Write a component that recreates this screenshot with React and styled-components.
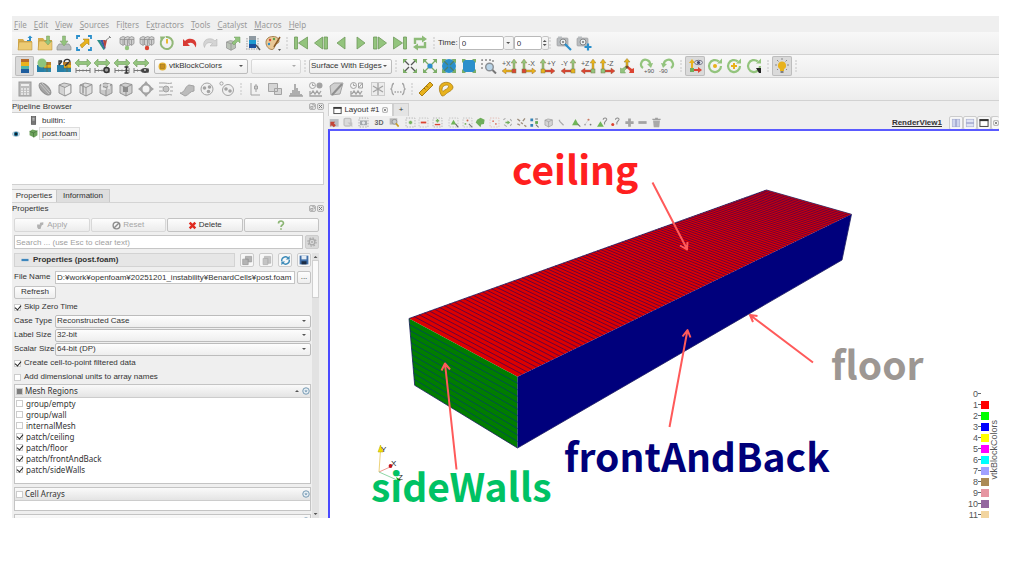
import styled, { createGlobalStyle } from "styled-components";

const GREEN = "#93c47d";
const GREY = "#a3a3a3";
const YELLOW = "#e8b21c";
const RED = "#dc4432";
const BLUE = "#2b8fcb";

const arrowsH = (
  <>
    <path d="M0 5l4-4v2.500h8v-2.500l4 4-4 4v-2.500h-8v2.500z" fill={GREEN} stroke="#6f9c5c" strokeWidth=".6" />
    <path d="M1 10v5M15 10v5M1 12.500h14M4.500 11.500v2M8 11.500v2M11.500 11.500v2" stroke="#777" fill="none" />
  </>
);

const camera = (
  <>
    <rect x="1" y="3" width="11" height="8" rx="1" fill="#b9bdc0" stroke="#999" strokeWidth=".6" />
    <rect x="2" y="1.500" width="4" height="2" fill="#b9bdc0" />
    <circle cx="7" cy="7" r="3" fill="#e9eef0" stroke="#888" />
    <circle cx="7" cy="7" r="1" fill="#777" />
  </>
);

const cube = (fill) => (
  <g stroke="#8d8d8d" strokeWidth=".9" fill={fill}>
    <path d="M2 4l5-2 7 1.500v8.500l-6 3-6-3z" />
    <path d="M2 4l6 2.500 6-3M8 6.500v8.500" fill="none" />
  </g>
);

const servers = (
  <g stroke="#8a8a8a" strokeWidth=".7" fill="#cfcfcf">
    <path d="M1 3l3-1.500 3 1v6l-3 2-3-2z" />
    <path d="M5.500 3l3-1.500 3 1v7l-3 2-3-2z" />
    <path d="M10 3l2.500-1.500 2.500 1v6l-2.500 2-2.500-2z" />
    <path d="M1 4.500h14M4 5v5M8.500 5v6M12.500 5v5" fill="none" />
  </g>
);

const colorMap = (
  <>
    <rect x="7" y="4" width="8" height="3" fill="#b97d2a" />
    <rect x="7" y="7" width="8" height="3" fill={YELLOW} />
    <rect x="7" y="10" width="8" height="4" fill="#2e86a8" />
    <rect x="1" y="7" width="7" height="7" fill="#267fa8" />
    <path d="M11 4v10M7 10h8" stroke="#6b5a36" strokeWidth=".6" />
  </>
);

const outwards = (stroke) => (
  <g stroke={stroke} strokeWidth="1.300" fill="none">
    <path d="M7 7L2 2M9 7l5-5M7 9l-5 5M9 9l5 5" />
    <path d="M1 1h4.500l-4.500 4.500zM15 1v4.500l-4.500-4.500zM1 15v-4.500l4.500 4.500zM15 15h-4.500l4.500-4.500z" fill="#7cae67" stroke="none" />
  </g>
);

const axisView = (label, left, up, side, base) => (
  <>
    <path
      d={left ? "M12 12v-7h-2l3-4 3 4h-2v7z" : "M2 12v-7h-2l3-4 3 4h-2v7z"}
      fill={up}
      stroke="#8a7a3a"
      strokeWidth=".4"
    />
    <path
      d={left ? "M11 12h-6v-2l-4 3 4 3v-2h6z" : "M5 12h6v-2l4 3-4 3v-2h-6z"}
      fill={side}
      stroke="#8a5a3a"
      strokeWidth=".4"
    />
    <rect x={left ? 11 : 1} y="11" width="4" height="4" fill={base} stroke="#7a7a4a" strokeWidth=".5" />
    <text x={left ? 1 : 7} y="8" fontSize="7" fontFamily="Liberation Sans" fill="#555">{label}</text>
  </>
);

const spin = (
  <>
    <path d="M14 8a6 6 0 1 1-2.200-4.600" fill="none" stroke={GREEN} strokeWidth="2.200" />
    <path d="M10 5.500h5v-5z" fill={GREEN} />
  </>
);

const dashed = (color) => (
  <rect x="1.500" y="1.500" width="13" height="13" fill="none" stroke={color} strokeWidth="1.200" strokeDasharray="2 2" />
);

const plot = (
  <>
    <circle cx="4.500" cy="4.500" r="3" fill="none" stroke={GREY} />
    <path d="M4.500 2.500v2h2" fill="none" stroke={GREY} />
    <path d="M2 10v5h12M3 13l2-3 2 3 2-3 2 3 2-3" fill="none" stroke={GREY} strokeWidth="1.300" />
  </>
);

const glyphs = {
  open: (
    <>
      <path d="M1 4h5l1.500 2h7.500v9h-14z" fill="#d5ab4d" />
      <path d="M2 7h13v8h-14z" fill="#eccb74" stroke="#b48b34" strokeWidth=".5" />
      <path d="M10 5h2v-2h-1.500l2.500-2.500 2.500 2.500h-1.500v3h-4z" fill={BLUE} />
    </>
  ),
  openRecent: (
    <>
      <path d="M1 3h5l1.500 2h7.500v10h-14z" fill="#d5ab4d" />
      <path d="M2 6h13v9h-14z" fill="#eccb74" stroke="#b48b34" strokeWidth=".5" />
      <path d="M9.500 1h3v5h2l-3.500 4-3.500-4h2z" fill={GREEN} stroke="#7c9a4a" strokeWidth=".5" />
    </>
  ),
  save: (
    <>
      <path d="M1 12l2-3h10l2 3v3h-14z" fill="#b9bcbe" stroke="#8c8f91" strokeWidth=".7" />
      <path d="M6.500 1h3v5h2.500l-4 5-4-5h2.500z" fill={GREEN} stroke="#7c9a6a" strokeWidth=".5" />
    </>
  ),
  extract: (
    <>
      <path d="M1 4v-3h3M12 1h3v3M15 12v3h-3M4 15h-3v-3" fill="none" stroke={BLUE} strokeWidth="1.800" />
      <path d="M4 10l5-4-2-2h6v6l-2-2-5 5z" fill={YELLOW} stroke="#a27b12" strokeWidth=".5" />
    </>
  ),
  filter: (
    <>
      <path d="M1 5h3l5 9-1.500 1z" fill="#2c8c86" />
      <path d="M4 5h3l2.500 8-1 1z" fill="#3859a8" />
      <path d="M7 5h4l-2 9z" fill="#b8453a" />
      <path d="M9 6l5-4M13 1l2 2" stroke="#888" />
    </>
  ),
  connect: <>{servers}<circle cx="8" cy="13" r="2.200" fill={GREEN} /></>,
  disconnect: <>{servers}<circle cx="8" cy="13" r="2.200" fill={RED} /></>,
  history: (
    <>
      <path d="M3.200 4a6 6 0 1 0 3.800-2" fill="none" stroke="#92b878" strokeWidth="2" />
      <path d="M1 1.500h6l-5 5z" fill="#92b878" />
      <path d="M8 4v4.500" stroke={YELLOW} strokeWidth="1.800" />
    </>
  ),
  undo: <path d="M1 4v7h7l-2.500-2.500c3.500-2 7-.5 8 4 2.500-5-1-10-7.500-8.500-1.200.3-2 1-3 2z" fill="#d83b34" />,
  redo: (
    <path
      d="M15 4v7h-7l2.500-2.500c-3.500-2-7-.5-8 4-2.500-5 1-10 7.500-8.500 1.200.3 2 1 3 2z"
      fill="#d4d4d4"
      stroke="#b0b0b0"
      strokeWidth=".5"
    />
  ),
  cubeUp: (
    <>
      <g transform="translate(0 4) scale(.75)">{cube("#b9c1b6")}</g>
      <path d="M7 8l4-4-2-2h6v6l-2-2-4 4z" fill={GREEN} stroke="#6f9c5c" strokeWidth=".5" />
    </>
  ),
  barSelect: (
    <>
      <rect x="4" y="1" width="7" height="4" fill="#8f9aa2" />
      <rect x="4" y="5" width="7" height="4" fill="#1f9ad0" />
      <rect x="4" y="9" width="7" height="4" fill="#1b4f9c" />
      <path d="M1 14h12M2 3v10M13 3v10" stroke="#999" strokeDasharray="1.500 1" />
      <path d="M11 10l4 5" stroke="#555" strokeWidth="1.500" />
    </>
  ),
  palette: (
    <>
      <path d="M8 1.500c5 0 6 3 6 5s-3 2-4 3 0 5-3 5-6-3-6-7 3-6 7-6z" fill="#e9c896" stroke="#a88454" />
      <circle cx="5" cy="5" r="1.200" fill={RED} />
      <circle cx="4" cy="9" r="1.200" fill={BLUE} />
      <circle cx="9" cy="4" r="1.200" fill="#5aa04c" />
      <path d="M15 2l-6 10" stroke="#8a5a24" strokeWidth="1.500" />
      <path d="M13 14h3l-1.500 2z" fill="#555" />
    </>
  ),
  first: <path d="M1.500 2h3v12h-3zM14.500 2v12l-9-6z" fill={GREEN} stroke="#709a5c" strokeWidth=".8" />,
  previous: <path d="M11 2h3.500v12h-3.500zM9.500 2v12l-8-6z" fill={GREEN} stroke="#709a5c" strokeWidth=".8" />,
  back: <path d="M12 2v12l-8-6z" fill={GREEN} stroke="#709a5c" strokeWidth=".8" />,
  play: <path d="M4 2v12l8-6z" fill={GREEN} stroke="#709a5c" strokeWidth=".8" />,
  next: <path d="M1.500 2h3.500v12h-3.500zM6.500 2v12l8-6z" fill={GREEN} stroke="#709a5c" strokeWidth=".8" />,
  last: <path d="M11.500 2h3v12h-3zM1.500 2v12l9-6z" fill={GREEN} stroke="#709a5c" strokeWidth=".8" />,
  loop: (
    <>
      <path d="M3 9v-5h8M13 7v5h-8" fill="none" stroke="#8dbb77" strokeWidth="2.400" />
      <path d="M10 .5l5 3.500-5 3.500zM6 8.500l-5 3.500 5 3.500z" fill="#8dbb77" />
    </>
  ),
  cameraEdit: <>{camera}<path d="M9 9l6 6" stroke={BLUE} strokeWidth="2.200" /></>,
  cameraAdd: <>{camera}<path d="M12 8.500v7M8.500 12h7" stroke={BLUE} strokeWidth="2.200" /></>,
  legend: (
    <>
      <rect x="4" y="1" width="8" height="4" fill="#b66a2a" />
      <rect x="4" y="4" width="8" height="4" fill={YELLOW} />
      <rect x="4" y="8" width="8" height="3" fill="#4fb6a8" />
      <rect x="4" y="11" width="8" height="4" fill="#1e5d9e" />
    </>
  ),
  mapEdit: <>{colorMap}<circle cx="6" cy="5" r="4.500" fill="#8cc47c" /></>,
  mapSeparate: (
    <>
      {colorMap}
      <path d="M3 7v-4h3M6 3l-3 4M8 4c1-4 6-3 6 0M13 4l-4 4" stroke="#333" strokeWidth="1.300" fill="none" />
    </>
  ),
  rescale: arrowsH,
  rescaleCustom: <>{arrowsH}<circle cx="12.500" cy="12" r="2.500" fill="#999" stroke="#333" strokeWidth="1.500" /></>,
  rescaleTime: <>{arrowsH}<path d="M10.500 9h4M12.500 9v6M10.500 15h4" stroke="#333" strokeWidth="1.500" /></>,
  rescaleVisible: <>{arrowsH}<ellipse cx="12" cy="12.500" rx="4" ry="2.500" fill="#444" /><circle cx="12" cy="12" r="1" fill="#ccc" /></>,
  reset: outwards("#555"),
  zoomData: <>{outwards("#7aa968")}<circle cx="8" cy="8" r="2.600" fill={BLUE} /></>,
  resetClosest: <><circle cx="8" cy="8" r="7" fill={BLUE} />{outwards("#4d7f6a")}</>,
  zoomClosest: (
    <>
      <rect x="2" y="2" width="12" height="12" rx="1" fill={BLUE} />
      <path d="M1 1h4l-4 4zM15 1v4l-4-4zM1 15v-4l4 4zM15 15h-4l4-4z" fill="#7cae67" />
    </>
  ),
  zoomBox: (
    <>
      <path d="M1 11v-9h11v3" stroke="#888" fill="none" strokeDasharray="2 2" strokeWidth="1.400" />
      <circle cx="8.500" cy="9" r="3.800" fill="#b8d4e8" stroke="#8a8f94" strokeWidth="1.400" />
      <path d="M11.500 12l3.500 3.500" stroke="#777" strokeWidth="2" />
    </>
  ),
  plusX: axisView("+X", true, GREEN, YELLOW, RED),
  minusX: axisView("-X", false, GREEN, YELLOW, RED),
  plusY: axisView("+Y", false, GREEN, RED, YELLOW),
  minusY: axisView("-Y", true, GREEN, RED, YELLOW),
  plusZ: axisView("+Z", true, YELLOW, RED, GREEN),
  minusZ: axisView("-Z", false, YELLOW, RED, GREEN),
  isometric: (
    <>
      <path d="M7 9v-5h-2l3-3.500 3 3.500h-2v5z" fill={YELLOW} stroke="#8a7a3a" strokeWidth=".5" />
      <path d="M7 8l-4 3-1.500-1v5h5l-1.500-2 3-3z" fill={GREEN} stroke="#6b9a56" strokeWidth=".5" />
      <path d="M9 8l4 3 2-1v5h-5l1-2-3-3z" fill={RED} />
      <circle cx="8" cy="9" r="1.500" fill="#7a4a2a" />
    </>
  ),
  rotateRight: (
    <>
      <path d="M4 10a4.500 4.500 0 1 1 7-3" fill="none" stroke={GREEN} strokeWidth="2.200" />
      <path d="M8 6l6-1-2 5z" fill={GREEN} />
      <text x="5" y="15" fontSize="6" fontFamily="Liberation Sans" fill="#555">+90</text>
    </>
  ),
  rotateLeft: (
    <>
      <path d="M12 10a4.500 4.500 0 1 0-7-3" fill="none" stroke={GREEN} strokeWidth="2.200" />
      <path d="M8 6l-6-1 2 5z" fill={GREEN} />
      <text x="0" y="15" fontSize="6" fontFamily="Liberation Sans" fill="#555">-90</text>
    </>
  ),
  axesEye: (
    <>
      <path d="M5 12v-9" stroke={YELLOW} strokeWidth="2" />
      <path d="M2 5l3-4 3 4z" fill={YELLOW} />
      <path d="M5 12h8" stroke={RED} strokeWidth="2" />
      <path d="M11 9l4 3-4 3z" fill={RED} />
      <rect x="3" y="10" width="4" height="4" fill="#6fae5c" />
      <ellipse cx="11.500" cy="4.500" rx="4" ry="2.200" fill="#dfe3ea" stroke="#778" />
      <circle cx="11.500" cy="4.500" r="1.600" fill="#446" />
    </>
  ),
  centerShow: <>{spin}<circle cx="8" cy="8" r="2" fill={YELLOW} /></>,
  centerReset: <>{spin}<path d="M8 5v6M5 8h6" stroke={YELLOW} strokeWidth="2" /></>,
  centerPick: <>{spin}<path d="M10 10h5v5h-2z" fill="#222" /></>,
  bulb: (
    <>
      <path d="M8 3.500a4 4 0 0 1 2 7.500v2h-4v-2a4 4 0 0 1 2-7.500z" fill={YELLOW} />
      <path d="M6.500 14h3" stroke="#777" strokeWidth="1.800" />
      <path d="M8 0v2M1 7h2M13 7h2M3 2l1.500 1.500M13 2l-1.500 1.500M3 12l1-1M13 12l-1-1" stroke="#888" />
    </>
  ),
  calculator: (
    <>
      <rect x="2" y="1" width="12" height="14" fill="#bdbdbd" stroke="#999" />
      <path d="M4 4h8" stroke="#eee" strokeWidth="2" />
      <path d="M4 8h8M4 10.500h8M4 13h8" stroke="#eee" strokeWidth="1.400" strokeDasharray="2 1" />
    </>
  ),
  contour: (
    <>
      <ellipse cx="8" cy="8" rx="3.800" ry="7.500" transform="rotate(-45 8 8)" fill={GREY} stroke="#909090" />
      <path d="M3 3l9 10M5 2l8 9" stroke="#c8c8c8" />
    </>
  ),
  clip: <>{cube("#d3d3d3")}<path d="M8 7l5-2.500v7l-5 2.500z" fill="#eee" /></>,
  slice: <>{cube("#dedede")}<path d="M5 3v9.500" stroke="#999" strokeWidth="1.500" /></>,
  threshold: <>{cube("#c8c8c8")}<path d="M4 2v6h4M11 3v5" stroke="#eee" strokeWidth="1.500" fill="none" /></>,
  subset: <>{cube("#cfcfcf")}<path d="M5 6h5v5h-5z" fill="#8b8b8b" /></>,
  glyph: (
    <>
      <circle cx="8" cy="8" r="4.500" fill="none" stroke={GREY} strokeWidth="2" />
      <path d="M8 0l3 4h-6zM8 16l3-4h-6zM0 8l4-3v6zM16 8l-4-3v6z" fill={GREY} />
    </>
  ),
  stream: (
    <>
      <path d="M1 2h5c3 0 4 1 8 0M1 14h5c3 0 4-1 8 0M1 6h4M1 10h4" stroke={GREY} fill="none" />
      <circle cx="8" cy="8" r="3" fill="#c4c4c4" stroke={GREY} />
      <path d="M12 6h3M12 10h3" stroke={GREY} />
    </>
  ),
  warp: <path d="M1 12c5 0 5-7 9-8l5 1v5c-4 0-5 4-9 5z" fill="#bcbcbc" stroke={GREY} />,
  group: (
    <>
      <circle cx="8" cy="8" r="6" fill="#f0f0f0" stroke={GREY} />
      <circle cx="5.500" cy="7" r="1.800" fill={GREY} />
      <circle cx="10.500" cy="6" r="1.800" fill={GREY} />
      <circle cx="9.500" cy="10.500" r="1.800" fill={GREY} />
    </>
  ),
  ungroup: (
    <>
      <circle cx="9" cy="9" r="5.500" fill="#f0f0f0" stroke={GREY} />
      <circle cx="2.500" cy="2.500" r="1.600" fill="none" stroke={GREY} />
      <circle cx="7" cy="8" r="1.800" fill={GREY} />
      <circle cx="11" cy="10" r="1.800" fill={GREY} />
    </>
  ),
  probe: <path d="M4 2v12h9M9 3v8M7.500 5h3v3h-3z" stroke={GREY} fill="none" />,
  region: <path d="M1.500 2.500h9v8h-9zM7.500 7.500h7v6h-7z" fill="#d5d5d5" stroke={GREY} />,
  histogram: <path d="M1 15h14M3 15v-3M5 15v-6M7 15v-12M9 15v-8M11 15v-5M13 15v-2" stroke={GREY} strokeWidth="1.700" />,
  plotSphere: <>{plot}<circle cx="11.500" cy="4.500" r="3" fill={GREY} /></>,
  plotLine: <><path d="M1 5l4-3h9l-3 11-9 1z" fill="#cfcfcf" stroke={GREY} /><path d="M3 14l10-11" stroke="#8f8f8f" strokeWidth="2" /></>,
  plotTime: <>{plot}<path d="M9.500 2h4v5h-4zM9.500 7l4-5" fill="none" stroke={GREY} /></>,
  star: <><rect x="1.500" y="1.500" width="13" height="13" fill="#ececec" stroke="#ccc" /><path d="M8 2v12M3 5l10 6M13 5l-10 6" stroke={GREY} strokeWidth="1.300" /></>,
  braces: (
    <path
      d="M4 2.500c-3 0-1 4.500-3 5.500 2 1 0 5.500 3 5.500M12 2.500c3 0 1 4.500 3 5.500-2 1 0 5.500-3 5.500M4.500 11h1.500M7.200 11h1.500M10 11h1.500"
      stroke={GREY}
      strokeWidth="1.300"
      fill="none"
    />
  ),
  ruler: <><path d="M1 12l11-11 3 3-11 11z" fill={YELLOW} stroke="#a87d16" /><path d="M6 7l1.500 1.500M8.500 5l1.500 1.500" stroke="#8a6510" /></>,
  protractor: (
    <path
      d="M4 15C1 11 0 5 4 2.500S14 1.500 15 6c0 3.500-5 5-6.500 6.500S6 15 4 15zM5 10.500c1.500-2 5.500-2.500 5.500-5S5.500 4 4.500 6.500s-.5 3 .5 4z"
      fill={YELLOW}
      fillRule="evenodd"
      stroke="#a87d16"
      strokeWidth=".8"
    />
  ),
  undoView: <><path d="M1 3h13v11h-13z" fill="#b9bdc2" /><path d="M2 14v-7h7l-2 2 3 3-3 3-3-3z" fill="#c44536" /></>,
  redoView: <><rect x="3" y="2" width="10" height="11" rx="2" fill="#dadada" stroke="#c2c2c2" strokeWidth="2" /><path d="M8 8h7v7z" fill="#c2c2c2" /></>,
  capture: <>{dashed("#9a9a9a")}<rect x="3" y="5" width="10" height="7" fill="#a3a8ac" /><circle cx="8" cy="8.500" r="2.300" fill="#e3e7ea" /></>,
  zoomPick: <><rect x="1" y="2" width="11" height="9" fill="#b4b4b4" /><circle cx="8" cy="7" r="3.500" fill="#c9cdd0" stroke="#888" /><path d="M10 9l4 5" stroke="#caa02a" strokeWidth="2.400" /></>,
  selAdd: <>{dashed("#aaa")}<path d="M8 5.500v5M5.500 8h5" stroke="#77b35f" strokeWidth="2.600" /></>,
  selRemove: <>{dashed("#bbb")}<path d="M4 8h8" stroke={RED} strokeWidth="2.600" /></>,
  selToggle: <>{dashed("#aaa")}<path d="M8 3v5M5.500 5.500h5" stroke="#77b35f" strokeWidth="2" /><path d="M4 11h8" stroke={RED} strokeWidth="2" /></>,
  selCells: <>{dashed("#bbb")}<path d="M8 4l4 7h-8z" fill="#6fb457" /><path d="M11 10l4 5" stroke="#666" strokeWidth="1.500" /></>,
  selPoints: <>{dashed("#bbb")}<circle cx="5" cy="10" r="1.400" fill="#77b35f" /><circle cx="8" cy="5" r="1.400" fill="#c8694f" /><path d="M10 10l5 5" stroke="#777" strokeWidth="1.500" /></>,
  frustum: <path d="M3 4l5-3 6 3-1 6-4 1-1 4-4-4-3-3z" fill="#6fae5a" />,
  frustumPts: <>{dashed("#e2b5ae")}<circle cx="6" cy="6" r="1.300" fill="#df7668" /><circle cx="10" cy="10" r="1.300" fill="#df7668" /></>,
  polygon: <><path d="M2 4l3-2M12 3l2 3M3 11l4 3M12 13l2-3" stroke="#aaa" strokeWidth="1.500" /><path d="M5 7h3v-2l4 3-4 3v-2h-3z" fill="#75b060" /></>,
  polyPts: <path d="M2 3l4 3M13 2l-3 4M2 10l4 2M12 12l3 2M7 8l3 2" stroke="#9e8f7f" strokeWidth="2" />,
  blocks: <><path d="M2 2h4v4h-4zM2 10h4v4h-4z" fill="#3482b4" /><path d="M9 6h4v4h-4z" fill="#5ea94c" /><path d="M10 11l4 4M9 3h4" stroke="#777" strokeWidth="1.500" /></>,
  blocksOff: <g transform="translate(1 1) scale(.9)">{cube("#d4d4d4")}</g>,
  pick: <path d="M5 6l6 6M4 5h2" stroke="#aaa" strokeWidth="1.800" />,
  pickCell: <><path d="M8 3l5 9h-10z" fill="#6fb457" /><path d="M11 10l4 4" stroke="#777" strokeWidth="1.600" /></>,
  pickPoint: <><circle cx="8" cy="4" r="1.500" fill="#c8694f" /><circle cx="3" cy="11" r="1.300" fill="#999" /><circle cx="11" cy="11" r="1.300" fill="#777" /><path d="M8 4l-5 7" stroke="#ccc" /></>,
  hoverCell: <><path d="M5 6l5 8h-10z" fill="#6fb457" /><path d="M9 4c0-4 6-3 5 0l-3 4v3" stroke="#888" strokeWidth="1.500" fill="none" /></>,
  hoverPoint: <><circle cx="4" cy="11" r="2.200" fill={RED} /><path d="M8 4c0-4 6-3 5 0l-3 4v3" stroke="#888" strokeWidth="1.500" fill="none" /></>,
  grow: <path d="M8 2v12M2 8h12" stroke="#a3a3a3" strokeWidth="4" />,
  shrink: <path d="M2 8h12" stroke="#a3a3a3" strokeWidth="4" />,
  trash: <><path d="M3 5h10l-1 10h-8z" fill="#a9a9a9" /><path d="M2 3.500h12M6 2h4" stroke="#a0a0a0" strokeWidth="2" /></>,
  server: <><rect x="4" y="1" width="8" height="14" fill="#777" stroke="#444" /><path d="M6 4h4M6 7h4" stroke="#ddd" strokeWidth="1.500" /></>,
  mesh: <><path d="M1 4l5-3 9 2v8l-6 4-8-4z" fill="#6da25c" /><path d="M1 4l7 3 7-4M8 7v8" stroke="#3d6a35" fill="none" /></>,
  eye: <><ellipse cx="8" cy="8" rx="7.500" ry="5" fill="#cfe6f0" stroke="#9ab" /><circle cx="8" cy="8" r="4.500" fill="#1d6d92" /><circle cx="8" cy="8" r="2.500" fill="#10202c" /></>,
  apply: <path d="M2 6h5v-3l6-1v4l-3 2-2 6h-4l-2-3z" fill="#b2b2b2" />,
  forbid: <><circle cx="8" cy="8" r="6" fill="none" stroke="#8c8c8c" strokeWidth="2.500" /><path d="M4 12l8-8" stroke="#8c8c8c" strokeWidth="2.500" /></>,
  cross: <path d="M3 3l10 10M13 3l-10 10" stroke="#e02b20" strokeWidth="4.500" />,
  help: <path d="M4 5.500c0-5 8-5 8-.5 0 3-4 3-4 6M8 13v2.500" stroke="#8bb573" strokeWidth="2.600" fill="none" />,
  gear: <><circle cx="8" cy="8" r="4.500" fill="none" stroke="#aaa" strokeWidth="2" /><circle cx="8" cy="8" r="6.500" fill="none" stroke="#aaa" strokeWidth="2" strokeDasharray="2.500 2.600" /><circle cx="8" cy="8" r="1.500" fill="#aaa" /></>,
  minus: <path d="M1 8h14" stroke="#3d86bd" strokeWidth="4.500" />,
  copy: <path d="M1 6h8v8h-8zM5 2h9v8h-5v-4h-4z" fill="#b4b4b4" stroke="#999" />,
  paste: <path d="M3 5h7v9h-7zM5 2h9v10h-4v-7h-5z" fill="#c4c4c4" stroke="#b0b0b0" />,
  refresh: <><path d="M2.500 9a5.500 5.500 0 0 1 9-5M13.500 7a5.500 5.500 0 0 1-9 5" stroke="#3b8ab8" strokeWidth="2" fill="none" /><path d="M14 1v5.500h-5.500zM2 15v-5.500h5.500z" fill="#3b8ab8" /></>,
  floppy: <><path d="M1 1h14v14h-14z" fill="#3f6ea8" /><path d="M4 1h8v6h-8z" fill="#e4ecf4" /><path d="M4 10h8v5h-8z" fill="#1d2c44" /></>,
  float: <><rect x="1.500" y="1.500" width="13" height="13" rx="2" fill="none" stroke="#8a8a8a" strokeWidth="1.600" /><path d="M4 8h5v4h-5zM7 4h5v5" stroke="#8a8a8a" strokeWidth="1.500" fill="none" /></>,
  close: <><rect x="1.500" y="1.500" width="13" height="13" rx="2" fill="none" stroke="#8a8a8a" strokeWidth="1.600" /><path d="M4.500 4.500l7 7M11.500 4.500l-7 7" stroke="#777" strokeWidth="2.200" /></>,
  splitH: <><rect x="2" y="2" width="12" height="12" fill="#cfd5ee" stroke="#a5acd0" /><path d="M8 2v12" stroke="#8088b8" strokeWidth="1.500" /></>,
  splitV: <><rect x="2" y="2" width="12" height="12" fill="#dfe3f4" stroke="#a5acd0" /><path d="M2 8h12" stroke="#8088b8" strokeWidth="1.500" /></>,
  windowBox: <><rect x="1.500" y="2.500" width="13" height="11" fill="#fff" stroke="#444" strokeWidth="1.600" /><path d="M1 3.500h14" stroke="#333" strokeWidth="3" /></>,
  rangeMenu: <><circle cx="8" cy="8" r="6.500" fill="#e5edf3" stroke="#5d87a5" strokeWidth="1.600" /><path d="M5 7l3 3.500 3-3.500z" fill="#5d87a5" /></>,
  dotColor: <><circle cx="8" cy="8" r="7" fill="#e0ae32" /><rect x="4.500" y="4.500" width="7" height="7" fill="#c98f1e" stroke="#9a7420" /></>,
};

function Icon({ name, size = 16 }) {
  return (
    <svg width={size} height={size} viewBox="0 0 16 16" aria-hidden="true">
      {glyphs[name]}
    </svg>
  );
}

function Tools({ names, width, pressed, small }) {
  return (
    <ToolGroup $width={width}>
      {names.map((name) => (
        <ToolButton key={name} type="button" aria-label={name} $pressed={name === pressed} $small={small}>
          <Icon name={name} size={small ? 11 : 16} />
        </ToolButton>
      ))}
    </ToolGroup>
  );
}

// "_" stands before the letter of the shortcut
const menus = [
  "_File", "_Edit", "_View", "_Sources", "Fi_lters",
  "E_xtractors", "_Tools", "_Catalyst", "_Macros", "_Help",
];

function Menu({ label }) {
  const [before, after] = label.split("_");
  return (
    <MenuItem type="button">
      {before}<u>{after[0]}</u>{after.slice(1)}
    </MenuItem>
  );
}

const regions = [
  ["group/empty", false],
  ["group/wall", false],
  ["internalMesh", false],
  ["patch/ceiling", true],
  ["patch/floor", true],
  ["patch/frontAndBack", true],
  ["patch/sideWalls", true],
];

const blockColors = [
  "transparent", "#ff0000", "#00ff00", "#0000ff", "#ffff00", "#ff00ff",
  "#00ffff", "#a1a1ff", "#ab8a55", "#e696a2", "#9467a0", "#f2d5a0",
];

// corners of the box after projection
const A = [79, 187.5];
const B = [436.5, 59];
const C = [521.5, 83.3];
const D = [187.5, 245.7];
const A2 = [84.7, 254.3];
const C2 = [512, 129];
const D2 = [187.5, 317];

const mix = (p, q, t) => [p[0] + (q[0] - p[0]) * t, p[1] + (q[1] - p[1]) * t];
const line = (p, q) => `M${p[0].toFixed(1)} ${p[1].toFixed(1)}L${q[0].toFixed(1)} ${q[1].toFixed(1)}`;
const poly = (...pts) => pts.map((p) => p.join(",")).join(" ");
// cells get smaller with the distance from the eye
const depth = (s) => s / (s + (1 - s) * 0.68);

const TOP_CELLS = 100;
const SIDE_CELLS = 11;
const topEdges = Array.from({ length: TOP_CELLS - 1 }, (_, i) => {
  const t = depth((i + 1) / TOP_CELLS);
  return line(mix(A, B, t), mix(D, C, t));
}).join("");
const sideEdges = Array.from({ length: SIDE_CELLS - 1 }, (_, i) => {
  const t = (i + 1) / SIDE_CELLS;
  return line(mix(A, A2, t), mix(D, D2, t));
}).join("");

function Scene() {
  return (
    <SceneSvg viewBox="0 0 670 387" width="670" height="387" aria-hidden="true">
      <polygon points={poly(A, B, C, D)} fill="#dc0000" />
      <path d={topEdges} stroke="#5c0044" strokeWidth=".9" />
      <polygon points={poly(A, D, D2, A2)} fill="#007d00" />
      <path d={sideEdges} stroke="#00504a" strokeWidth="1" />
      <polygon points={poly(D, C, C2, D2)} fill="#00007c" />
      <polygon points={poly(A, B, C, C2, D2, A2)} fill="none" stroke="#1c1c60" strokeWidth=".8" />
      <path d="M49 341l1.500-22" stroke="#ecd27a" />
      <path d="M50.500 314l2.500 7h-5z" fill="#f2e000" stroke="#b8a800" strokeWidth=".5" />
      <path d="M49 341l11-5" stroke="#f09a92" />
      <circle cx="60.500" cy="335" r="1.900" fill="#c4141c" />
      <path d="M49 341l18 8" stroke="#8fd8a8" />
      <path d="M66 346l5 3-3 2z" fill="#0dbb0d" />
      <g fontFamily="Liberation Sans" fontSize="8" fill="#222">
        <text x="51" y="321">Y</text>
        <text x="61" y="335">X</text>
        <text x="68" y="349">Z</text>
      </g>
    </SceneSvg>
  );
}

function Arrows() {
  return (
    <SceneSvg viewBox="0 0 670 387" width="670" height="387" aria-hidden="true">
      <g fill="none" stroke="#ff5a5a" strokeWidth="2" strokeLinejoin="round">
        <path d="M322.500 51.500L357 118M350 114.500L357 118.500L357.500 111" />
        <path d="M126.500 338.500L115 232.500M111.500 239.500L115 232.500L120 238.500" />
        <path d="M339.500 296L357.500 199M352.500 205.500L357.500 199L360.500 206.500" />
        <path d="M483 231.500L420 184M423 191L420 184L427.500 185" />
      </g>
    </SceneSvg>
  );
}

export default function App() {
  return (
    <>
      <GlobalStyle />
      <Slide>
        <Window>
          <MenuBar>
            {menus.map((m) => <Menu key={m} label={m} />)}
          </MenuBar>

          <ToolBar>
            <Tools width={99} names={["open", "openRecent", "save", "extract", "filter"]} />
            <Tools width={60} names={["connect", "disconnect", "history"]} />
            <Tools width={40} names={["undo", "redo"]} />
            <Tools width={60} names={["cubeUp", "barSelect", "palette"]} />
            <Handle />
            <Tools width={139} names={["first", "previous", "back", "play", "next", "last", "loop"]} />
            <Handle />
            <TimeLabel htmlFor="time">Time:</TimeLabel>
            <Spin>
              <Field id="time" defaultValue="0" $width={45} />
              <Stepper type="button" aria-label="time values" $wide><Caret /></Stepper>
            </Spin>
            <Spin>
              <Field aria-label="time step" defaultValue="0" $width={28} />
              <Stepper type="button" aria-label="step"><Caret $up /><Caret /></Stepper>
            </Spin>
            <Handle />
            <Tools width={40} names={["cameraEdit", "cameraAdd"]} />
          </ToolBar>

          <ToolBar>
            <Tools
              width={136}
              pressed="legend"
              names={["legend", "mapEdit", "mapSeparate", "rescale", "rescaleCustom", "rescaleTime", "rescaleVisible"]}
            />
            <Combo $width={94} $icon>
              <Icon name="dotColor" size={9} />
              <select aria-label="Coloring"><option>vtkBlockColors</option></select>
            </Combo>
            <Combo $width={50} $faint><select aria-label="Component" disabled><option> </option></select></Combo>
            <Handle />
            <Combo $width={83}><select aria-label="Representation"><option>Surface With Edges</option></select></Combo>
            <Handle />
            <Tools
              width={277}
              names={[
                "reset", "zoomData", "resetClosest", "zoomClosest", "zoomBox", "plusX", "minusX",
                "plusY", "minusY", "plusZ", "minusZ", "isometric", "rotateRight", "rotateLeft",
              ]}
            />
            <Handle />
            <Tools width={79} pressed="axesEye" names={["axesEye", "centerShow", "centerReset", "centerPick"]} />
            <Handle />
            <Tools width={20} pressed="bulb" names={["bulb"]} />
            <Handle />
          </ToolBar>

          <ToolBar>
            <Tools
              width={222}
              names={[
                "calculator", "contour", "clip", "slice", "threshold", "subset",
                "glyph", "stream", "warp", "group", "ungroup",
              ]}
            />
            <Handle />
            <Tools
              width={163}
              names={["probe", "region", "histogram", "plotSphere", "plotLine", "plotTime", "star", "braces"]}
            />
            <Handle />
            <Tools width={40} names={["ruler", "protractor"]} />
          </ToolBar>

          <Body>
            <Dock>
              <DockTitle>
                Pipeline Browser
                <span><Icon name="float" size={7} /><Icon name="close" size={7} /></span>
              </DockTitle>
              <Tree>
                <TreeRow>
                  <i />
                  <Icon name="server" size={9} />
                  <TreeName>builtin:</TreeName>
                </TreeRow>
                <TreeRow>
                  <Icon name="eye" size={8} />
                  <Icon name="mesh" size={9} />
                  <TreeName $active>post.foam</TreeName>
                </TreeRow>
              </Tree>
              <TabRow>
                <Tab type="button" $active>Properties</Tab>
                <Tab type="button">Information</Tab>
              </TabRow>
              <DockTitle>
                Properties
                <span><Icon name="float" size={7} /><Icon name="close" size={7} /></span>
              </DockTitle>

              <Actions>
                <Button type="button" disabled><Icon name="apply" size={9} />Apply</Button>
                <Button type="button" disabled><Icon name="forbid" size={9} />Reset</Button>
                <Button type="button"><Icon name="cross" size={9} />Delete</Button>
                <Button type="button" aria-label="Help"><Icon name="help" size={10} /></Button>
              </Actions>
              <SearchRow>
                <Search aria-label="Search" placeholder="Search ... (use Esc to clear text)" />
                <SquareButton type="button" aria-label="advanced" $pressed><Icon name="gear" size={10} /></SquareButton>
              </SearchRow>

              <Scroll>
                <Form>
                  <HeaderRow>
                    <Header><Icon name="minus" size={8} />Properties (post.foam)</Header>
                    <SquareButton type="button" aria-label="copy"><Icon name="copy" size={11} /></SquareButton>
                    <SquareButton type="button" aria-label="paste"><Icon name="paste" size={11} /></SquareButton>
                    <SquareButton type="button" aria-label="restore"><Icon name="refresh" size={11} /></SquareButton>
                    <SquareButton type="button" aria-label="save"><Icon name="floppy" size={10} /></SquareButton>
                  </HeaderRow>
                  <FormRow>
                    <label htmlFor="file">File Name</label>
                    <PathInput id="file" defaultValue="D:¥work¥openfoam¥20251201_instability¥BenardCells¥post.foam" />
                    <SmallButton type="button" $width={14}>...</SmallButton>
                  </FormRow>
                  <FormRow><SmallButton type="button" $width={42}>Refresh</SmallButton></FormRow>
                  <CheckRow><Check type="checkbox" defaultChecked />Skip Zero Time</CheckRow>
                  <FormRow>
                    <label htmlFor="case">Case Type</label>
                    <Combo><select id="case"><option>Reconstructed Case</option></select></Combo>
                  </FormRow>
                  <FormRow>
                    <label htmlFor="labelSize">Label Size</label>
                    <Combo><select id="labelSize"><option>32-bit</option></select></Combo>
                  </FormRow>
                  <FormRow>
                    <label htmlFor="scalarSize">Scalar Size</label>
                    <Combo><select id="scalarSize"><option>64-bit (DP)</option></select></Combo>
                  </FormRow>
                  <CheckRow><Check type="checkbox" defaultChecked />Create cell-to-point filtered data</CheckRow>
                  <CheckRow><Check type="checkbox" />Add dimensional units to array names</CheckRow>

                  <List $height={100}>
                    <ListHead>
                      <Check type="checkbox" $partial aria-label="Mesh Regions" />
                      Mesh Regions
                      <b><Caret $up /><Icon name="rangeMenu" size={8} /></b>
                    </ListHead>
                    {regions.map(([name, on]) => (
                      <ListRow key={name}><Check type="checkbox" defaultChecked={on} />{name}</ListRow>
                    ))}
                  </List>
                  <List $height={24}>
                    <ListHead>
                      <Check type="checkbox" aria-label="Cell Arrays" />
                      Cell Arrays
                      <b><Icon name="rangeMenu" size={8} /></b>
                    </ListHead>
                  </List>
                  <List $height={24}>
                    <ListHead>
                      <Check type="checkbox" aria-label="Point Arrays" />
                      <b><Icon name="rangeMenu" size={8} /></b>
                    </ListHead>
                  </List>
                </Form>
                <ScrollBar><Caret $up /><Thumb /><Caret /></ScrollBar>
              </Scroll>
            </Dock>

            <Main>
              <LayoutTabs>
                <LayoutTab type="button" $active>
                  <Icon name="windowBox" size={9} />Layout #1<Icon name="close" size={6} />
                </LayoutTab>
                <LayoutTab type="button">+</LayoutTab>
              </LayoutTabs>
              <ViewBar>
                <Tools small width={26} names={["undoView", "redoView"]} />
                <Tools small width={13} names={["capture"]} />
                <ViewButton type="button">3D</ViewButton>
                <Tools small width={13} names={["zoomPick"]} />
                <Tools small width={40} names={["selAdd", "selRemove", "selToggle"]} />
                <Tools
                  small
                  width={216}
                  names={[
                    "selCells", "selPoints", "frustum", "frustumPts", "polygon", "polyPts", "blocks", "blocksOff",
                    "pick", "pickCell", "pickPoint", "hoverCell", "hoverPoint", "grow", "shrink", "trash",
                  ]}
                />
                <ViewName>RenderView1</ViewName>
                <ViewControls>
                  <SquareButton type="button" aria-label="split right"><Icon name="splitH" size={10} /></SquareButton>
                  <SquareButton type="button" aria-label="split down"><Icon name="splitV" size={10} /></SquareButton>
                  <SquareButton type="button" aria-label="maximize"><Icon name="windowBox" size={10} /></SquareButton>
                  <CutButton type="button" aria-label="close view"><Icon name="close" size={6} /></CutButton>
                </ViewControls>
              </ViewBar>
              <Viewport>
                <Scene />
                <Note $x={182} $y={17} $color="#ff1f1f">ceiling</Note>
                <Note $x={501} $y={212} $color="#9d9793">floor</Note>
                <Note $x={234} $y={304} $color="#00007a">frontAndBack</Note>
                <Note $x={41} $y={334} $color="#00c264">sideWalls</Note>
                <Arrows />
                <Legend>
                  <ul>
                    {blockColors.map((c, i) => (
                      <LegendItem key={c} $color={c}>{i}</LegendItem>
                    ))}
                  </ul>
                  <LegendTitle>vtkBlockColors</LegendTitle>
                </Legend>
              </Viewport>
            </Main>
          </Body>
        </Window>
      </Slide>
    </>
  );
}

const GlobalStyle = createGlobalStyle`
  * {
    box-sizing: border-box;
  }

  body {
    margin: 0;
    background: #ffffff;
  }

  button, input, select {
    margin: 0;
    padding: 0;
    border: none;
    background: none;
    font: inherit;
    color: inherit;
  }

  svg {
    display: block;
    flex: none;
  }
`;

const Slide = styled.div`
  display: flex;
  height: 100vh;
  padding: 16px 25px 58px 12px;
`;

const Window = styled.div`
  display: flex;
  flex: 1;
  flex-direction: column;
  min-width: 0;
  overflow: hidden;

  background: #efefef;
  color: #333333;
  font-family: "Liberation Sans", Arial, sans-serif;
  font-size: 8px;
  line-height: 10px;
`;

const MenuBar = styled.nav`
  display: flex;
  flex: none;
  align-items: center;
  gap: 7px;
  height: 16px;
  padding: 2px 2px 0;

  color: #999999;
  font-family: "Noto Sans", sans-serif;
`;

const MenuItem = styled.button`
  white-space: nowrap;
`;

const ToolBar = styled.div`
  display: flex;
  flex: none;
  align-items: center;
  gap: 3px;
  height: 23px;
  padding: 0 3px;

  background: linear-gradient(#f8f8f8, #ededed);
  border-bottom: 1px solid #d2d2d2;
`;

const ToolGroup = styled.div`
  display: flex;
  flex: none;
  justify-content: space-between;
  width: ${(p) => p.$width}px;
`;

const ToolButton = styled.button`
  display: flex;
  flex: 0 1 ${(p) => (p.$small ? 14 : 20)}px;
  align-items: center;
  justify-content: center;
  min-width: 0;
  height: ${(p) => (p.$small ? 13 : 20)}px;

  border-radius: 2px;
  background: ${(p) => (p.$pressed ? "#dadada" : "none")};
  box-shadow: ${(p) => (p.$pressed ? "inset 0 0 0 1px #bdbdbd" : "none")};
`;

const Handle = styled.span`
  flex: none;
  width: 2px;
  height: 12px;
  border-left: 2px dotted #dcdcdc;
`;

const TimeLabel = styled.label`
  margin-right: -2px;
`;

const Spin = styled.div`
  display: flex;
  margin-right: -3px;
`;

const Field = styled.input`
  width: ${(p) => p.$width}px;
  height: 14px;
  padding: 0 2px;

  background: #ffffff;
  border: 1px solid #b9b9b9;
  border-radius: 2px;
`;

const Stepper = styled.button`
  display: flex;
  flex-direction: column;
  align-items: center;
  justify-content: center;
  gap: 2px;
  width: ${(p) => (p.$wide ? 10 : 7)}px;
  height: 14px;

  border: 1px solid #c4c4c4;
  border-left: none;
  border-radius: 2px;
`;

const Caret = styled.span`
  width: 4px;
  height: 2px;
  background: #555555;
  clip-path: ${(p) => (p.$up ? "polygon(0 100%, 50% 0, 100% 100%)" : "polygon(0 0, 100% 0, 50% 100%)")};
`;

const Combo = styled.div`
  position: relative;
  display: flex;
  flex: ${(p) => (p.$width ? "none" : 1)};
  align-items: center;
  width: ${(p) => (p.$width ? `${p.$width}px` : "auto")};
  height: ${(p) => (p.$width ? 15 : 13)}px;
  padding-left: ${(p) => (p.$icon ? 3 : 1)}px;

  background: linear-gradient(#fdfdfd, #eeeeee);
  border: 1px solid ${(p) => (p.$faint ? "#d8d8d8" : "#bcbcbc")};
  border-radius: 2px;

  select {
    flex: 1;
    min-width: 0;
    padding-left: ${(p) => (p.$icon ? 2 : 0)}px;
    appearance: none;
  }

  &::after {
    content: "";
    position: absolute;
    right: 4px;
    border: 2px solid transparent;
    border-top-color: ${(p) => (p.$faint ? "#aaaaaa" : "#555555")};
    border-bottom: none;
  }
`;

const Body = styled.div`
  display: flex;
  flex: 1;
  min-height: 0;
`;

const Dock = styled.aside`
  display: flex;
  flex: none;
  flex-direction: column;
  width: 312px;
  min-height: 0;
`;

const DockTitle = styled.div`
  display: flex;
  flex: none;
  align-items: center;
  justify-content: space-between;
  height: 11px;

  span {
    display: flex;
    gap: 1px;
  }
`;

const Tree = styled.div`
  flex: none;
  height: 73px;
  padding-top: 1px;
  background: #ffffff;
  border: 1px solid #d0d0d0;
  border-left: none;
`;

const TreeRow = styled.div`
  display: grid;
  grid-template-columns: 17px 10px auto;
  align-items: center;
  justify-content: start;
  height: 13px;
`;

const TreeName = styled.span`
  padding: 0 2px;
  line-height: 11px;
  border: 1px solid ${(p) => (p.$active ? "#dddddd" : "transparent")};
  background: ${(p) => (p.$active ? "#f7f7f7" : "none")};
`;

const TabRow = styled.div`
  display: flex;
  flex: none;
  height: 18px;
  padding-top: 4px;
  border-bottom: 1px solid #d4d4d4;
`;

const Tab = styled.button`
  width: ${(p) => (p.$active ? 45 : 53)}px;
  background: ${(p) => (p.$active ? "#f4f4f4" : "#dedede")};
  border: 1px solid #c9c9c9;
  border-left: none;
  border-bottom: none;
`;

const Actions = styled.div`
  display: grid;
  flex: none;
  grid-template-columns: repeat(4, 1fr);
  gap: 1px;
  padding: 4px 5px 0 2px;
`;

const Button = styled.button`
  display: flex;
  align-items: center;
  justify-content: center;
  gap: 2px;
  height: 14px;

  background: linear-gradient(#fdfdfd, #ececec);
  border: 1px solid #c3c3c3;
  border-radius: 2px;

  &:disabled {
    color: #a6a6a6;
    border-color: #d8d8d8;
  }
`;

const SearchRow = styled.div`
  display: flex;
  flex: none;
  gap: 2px;
  padding: 3px 5px 4px 2px;
`;

const Search = styled.input`
  flex: 1;
  min-width: 0;
  height: 14px;
  padding: 0 1px;

  background: #ffffff;
  border: 1px solid #c6c6c6;

  &::placeholder {
    color: #a0a0a0;
  }
`;

const SquareButton = styled.button`
  display: flex;
  flex: none;
  align-items: center;
  justify-content: center;
  width: 14px;
  height: 14px;

  background: ${(p) => (p.$pressed ? "#d9d9d9" : "#f7f7f7")};
  border: 1px solid #cccccc;
  border-radius: 2px;
`;

const Scroll = styled.div`
  display: flex;
  flex: 1;
  gap: 1px;
  min-height: 0;
  padding: 0 5px 0 2px;
  overflow: hidden;
`;

const Form = styled.div`
  display: flex;
  flex: 1;
  flex-direction: column;
  min-width: 0;
`;

const HeaderRow = styled.div`
  display: flex;
  flex: none;
  gap: 5px;
  margin-bottom: 3px;
`;

const Header = styled.div`
  display: flex;
  flex: 1;
  align-items: center;
  gap: 4px;
  padding-left: 6px;

  background: #e6e6e6;
  border: 1px solid #d3d3d3;
  font-weight: 700;
`;

const FormRow = styled.div`
  display: flex;
  flex: none;
  align-items: center;
  height: 14px;
  margin-bottom: 1px;

  label {
    flex: none;
    width: 41px;
  }

  &:has(select) {
    margin-bottom: 0;
  }
`;

const PathInput = styled.input`
  flex: 1;
  min-width: 0;
  height: 13px;
  margin-right: 2px;
  padding: 0 1px;
  background: #ffffff;
  border: 1px solid #c6c6c6;
`;

const SmallButton = styled.button`
  width: ${(p) => p.$width}px;
  height: 13px;
  background: linear-gradient(#fdfdfd, #eeeeee);
  border: 1px solid #c3c3c3;
  border-radius: 2px;
`;

const CheckRow = styled.label`
  display: flex;
  flex: none;
  align-items: center;
  gap: 3px;
  height: 14px;
`;

const Check = styled.input`
  position: relative;
  flex: none;
  width: 7px;
  height: 7px;
  appearance: none;

  background: ${(p) => (p.$partial ? "#7d7d7d" : "#ffffff")};
  border: 1px solid #cccccc;

  &:checked::after {
    content: "";
    position: absolute;
    left: 1px;
    top: -1px;
    width: 3px;
    height: 5px;
    border: solid #222222;
    border-width: 0 1px 1px 0;
    transform: rotate(40deg);
  }
`;

const List = styled.div`
  flex: none;
  height: ${(p) => p.$height}px;
  margin-bottom: 3px;

  background: #ffffff;
  border: 1px solid #c4c4c4;
  font-family: "Noto Sans", sans-serif;
`;

const ListHead = styled.div`
  display: flex;
  align-items: center;
  gap: 2px;
  height: 13px;
  padding-left: 1px;

  background: linear-gradient(#fafafa, #e4e4e4);
  border-bottom: 1px solid #cccccc;

  b {
    display: flex;
    align-items: center;
    gap: 3px;
    margin-left: auto;
  }
`;

const ListRow = styled.label`
  display: flex;
  align-items: center;
  gap: 3px;
  height: 11px;
  padding-left: 1px;
`;

const ScrollBar = styled.div`
  display: flex;
  flex: none;
  flex-direction: column;
  align-items: center;
  width: 7px;
  padding: 3px 0;
  background: #e2e2e2;
`;

const Thumb = styled.div`
  width: 7px;
  height: 38px;
  margin: 2px 0 auto;
  background: #fafafa;
  border: 1px solid #d0d0d0;
`;

const Main = styled.main`
  display: flex;
  flex: 1;
  flex-direction: column;
  min-width: 0;
  margin-left: 4px;
`;

const LayoutTabs = styled.div`
  display: flex;
  flex: none;
  height: 15px;
  padding-top: 2px;
`;

const LayoutTab = styled.button`
  display: flex;
  align-items: center;
  justify-content: center;
  gap: 2px;
  width: ${(p) => (p.$active ? 65 : 16)}px;

  background: ${(p) => (p.$active ? "#fbfbfb" : "#e4e4e4")};
  border: 1px solid #cfcfcf;
  border-bottom: none;
`;

const ViewBar = styled.div`
  display: flex;
  flex: none;
  align-items: center;
  gap: 3px;
  height: 13px;
`;

const ViewButton = styled.button`
  width: 12px;
  color: #666666;
  font-size: 7px;
  font-weight: 700;
`;

const ViewName = styled.span`
  margin-left: auto;
  margin-right: 4px;
  font-weight: 700;
  text-decoration: underline;
`;

const ViewControls = styled.div`
  display: flex;
`;

const CutButton = styled(SquareButton)`
  justify-content: flex-end;
  width: 8px;
  border-right: none;
`;

const Viewport = styled.section`
  position: relative;
  flex: 1;
  min-height: 0;
  overflow: hidden;

  background: #ffffff;
  border-top: 2px solid #5a5aff;
  border-left: 2px solid #4a4aff;
`;

const SceneSvg = styled.svg`
  position: absolute;
  left: 0;
  top: 0;
`;

const Note = styled.span`
  position: absolute;
  left: ${(p) => p.$x}px;
  top: ${(p) => p.$y}px;

  color: ${(p) => p.$color};
  font-family: "Noto Sans CJK JP", sans-serif;
  font-size: 39px;
  font-weight: 700;
  line-height: 40px;
`;

const Legend = styled.div`
  position: absolute;
  right: 0;
  top: 257px;
  display: flex;

  color: #555555;
  font-size: 9px;
  line-height: 10px;

  ul {
    margin: 0;
    padding: 0;
    list-style: none;
  }
`;

const LegendItem = styled.li`
  display: flex;
  align-items: center;
  justify-content: flex-end;
  height: 11px;

  &::before {
    content: "";
    order: 1;
    width: 3px;
    height: 1px;
    background: #666666;
  }

  &::after {
    content: "";
    order: 2;
    width: 8px;
    height: 8px;
    background: ${(p) => p.$color};
  }
`;

const LegendTitle = styled.span`
  align-self: center;
  margin-bottom: 8px;
  writing-mode: vertical-rl;
  transform: rotate(180deg);
`;
